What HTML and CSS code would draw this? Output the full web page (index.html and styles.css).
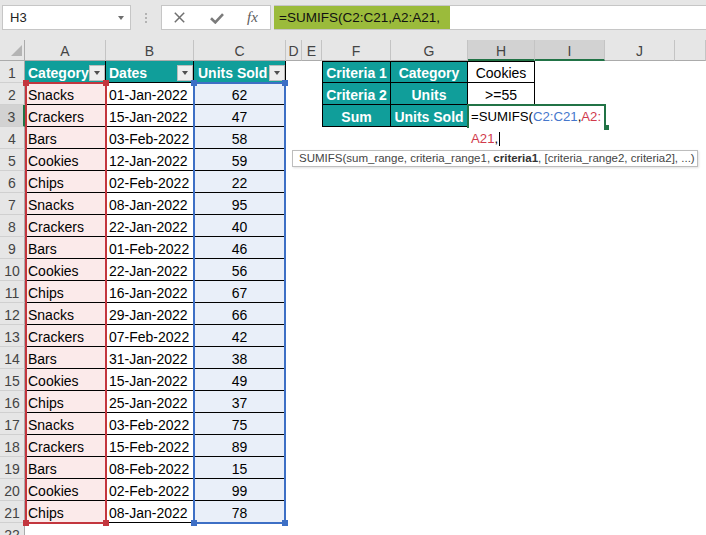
FILE: index.html
```html
<!DOCTYPE html>
<html>
<head>
<meta charset="utf-8">
<link rel="stylesheet" href="styles.css">
</head>
<body>
<div class="toolbar">
  <div class="namebox"><span class="name">H3</span><span class="nb-arrow"></span></div>
  <div class="grip"><i></i><i></i><i></i></div>
  <div class="fbtns">
    <svg class="ic-x" width="11" height="11" viewBox="0 0 11 11"><path d="M0.8 0.8 L10.2 10.2 M10.2 0.8 L0.8 10.2" stroke="#707070" stroke-width="1.5" fill="none"/></svg>
    <svg class="ic-ok" width="14" height="11" viewBox="0 0 14 11"><polyline points="1,5.2 5.3,9.4 13,1.2" stroke="#7b7b7b" stroke-width="2.6" fill="none"/></svg>
    <span class="fx">fx</span>
  </div>
  <div class="fbar"><span class="ftext">=SUMIFS(C2:C21,A2:A21,</span></div>
</div>
<div class="sheet">
  <div class="row colhead">
    <div class="ch corner"><svg width="24" height="20" viewBox="0 0 24 20"><polygon points="22,5 22,16 11,16" fill="#b4b4b4"/></svg></div>
    <div class="ch">A</div><div class="ch">B</div><div class="ch">C</div><div class="ch">D</div><div class="ch">E</div><div class="ch">F</div><div class="ch">G</div><div class="ch sel">H</div><div class="ch sel">I</div><div class="ch">J</div><div class="ch"></div>
  </div>
  <div class="row"><div class="rh">1</div><div class="c t hd">Category<span class="dd"></span></div><div class="c t hd">Dates<span class="dd"></span></div><div class="c t hd hc">Units Sold<span class="dd"></span></div><div></div><div></div><div class="k kh top first">Criteria 1</div><div class="k kh top">Category</div><div class="k top">Cookies</div></div>
  <div class="row"><div class="rh">2</div><div class="c t ca">Snacks</div><div class="c t">01-Jan-2022</div><div class="c t cc">62</div><div></div><div></div><div class="k kh first">Criteria 2</div><div class="k kh">Units</div><div class="k">&gt;=55</div></div>
  <div class="row"><div class="rh sel">3</div><div class="c t ca">Crackers</div><div class="c t">15-Jan-2022</div><div class="c t cc">47</div><div></div><div></div><div class="k kh first">Sum</div><div class="k kh">Units Sold</div></div>
  <div class="row"><div class="rh">4</div><div class="c t ca">Bars</div><div class="c t">03-Feb-2022</div><div class="c t cc">58</div></div>
  <div class="row"><div class="rh">5</div><div class="c t ca">Cookies</div><div class="c t">12-Jan-2022</div><div class="c t cc">59</div></div>
  <div class="row"><div class="rh">6</div><div class="c t ca">Chips</div><div class="c t">02-Feb-2022</div><div class="c t cc">22</div></div>
  <div class="row"><div class="rh">7</div><div class="c t ca">Snacks</div><div class="c t">08-Jan-2022</div><div class="c t cc">95</div></div>
  <div class="row"><div class="rh">8</div><div class="c t ca">Crackers</div><div class="c t">22-Jan-2022</div><div class="c t cc">40</div></div>
  <div class="row"><div class="rh">9</div><div class="c t ca">Bars</div><div class="c t">01-Feb-2022</div><div class="c t cc">46</div></div>
  <div class="row"><div class="rh">10</div><div class="c t ca">Cookies</div><div class="c t">22-Jan-2022</div><div class="c t cc">56</div></div>
  <div class="row"><div class="rh">11</div><div class="c t ca">Chips</div><div class="c t">16-Jan-2022</div><div class="c t cc">67</div></div>
  <div class="row"><div class="rh">12</div><div class="c t ca">Snacks</div><div class="c t">29-Jan-2022</div><div class="c t cc">66</div></div>
  <div class="row"><div class="rh">13</div><div class="c t ca">Crackers</div><div class="c t">07-Feb-2022</div><div class="c t cc">42</div></div>
  <div class="row"><div class="rh">14</div><div class="c t ca">Bars</div><div class="c t">31-Jan-2022</div><div class="c t cc">38</div></div>
  <div class="row"><div class="rh">15</div><div class="c t ca">Cookies</div><div class="c t">15-Jan-2022</div><div class="c t cc">49</div></div>
  <div class="row"><div class="rh">16</div><div class="c t ca">Chips</div><div class="c t">25-Jan-2022</div><div class="c t cc">37</div></div>
  <div class="row"><div class="rh">17</div><div class="c t ca">Snacks</div><div class="c t">03-Feb-2022</div><div class="c t cc">75</div></div>
  <div class="row"><div class="rh">18</div><div class="c t ca">Crackers</div><div class="c t">15-Feb-2022</div><div class="c t cc">89</div></div>
  <div class="row"><div class="rh">19</div><div class="c t ca">Bars</div><div class="c t">08-Feb-2022</div><div class="c t cc">15</div></div>
  <div class="row"><div class="rh">20</div><div class="c t ca">Cookies</div><div class="c t">02-Feb-2022</div><div class="c t cc">99</div></div>
  <div class="row"><div class="rh">21</div><div class="c t ca">Chips</div><div class="c t">08-Jan-2022</div><div class="c t cc">78</div></div>
  <div class="row"><div class="rh">22</div></div>

  <div class="rng red"><i class="hdl tl"></i><i class="hdl tr"></i><i class="hdl bl"></i><i class="hdl br"></i></div>
  <div class="rng blue"><i class="hdl tl"></i><i class="hdl tr"></i><i class="hdl bl"></i><i class="hdl br"></i></div>

  <div class="editor">
    <div class="ln">=SUMIFS(<span class="rb">C2:C21</span>,<span class="rr">A2:</span></div>
    <div class="ln"><span class="rr">A21</span>,<span class="caret"></span></div>
    <i class="fill"></i>
  </div>

  <div class="tip">SUMIFS(sum_range, criteria_range1, <b>criteria1</b>, [criteria_range2, criteria2], ...)</div>
</div>
</body>
</html>
```
FILE: styles.css
```css
* { box-sizing: border-box; }
html, body { margin: 0; padding: 0; }
body {
  width: 706px;
  height: 535px;
  overflow: hidden;
  background: #fff;
  font-family: "Liberation Sans", Arial, sans-serif;
  color: #000;
}

/* ---------- formula toolbar ---------- */
.toolbar {
  height: 40px;
  background: #e6e6e6;
  display: flex;
  align-items: flex-start;
  padding-top: 5px;
}
.namebox {
  margin-left: 2px;
  width: 129px;
  height: 25px;
  background: #fff;
  border: 1px solid #c6c6c6;
  display: flex;
  align-items: center;
  padding: 0 6px 0 7px;
  font-size: 13px;
  color: #222;
}
.namebox .name { flex: 1; }
.nb-arrow {
  width: 0; height: 0;
  border-left: 3.5px solid transparent;
  border-right: 3.5px solid transparent;
  border-top: 4px solid #6e6e6e;
}
.grip {
  width: 30px;
  height: 25px;
  display: flex;
  flex-direction: column;
  align-items: center;
  justify-content: center;
  gap: 2px;
}
.grip i { display: block; width: 2px; height: 2px; background: #b3b3b3; }
.fbtns {
  width: 110px;
  height: 25px;
  background: #fff;
  border: 1px solid #c6c6c6;
  display: flex;
  align-items: center;
  padding-left: 12px;
}
.ic-x { display: block; }
.ic-ok { display: block; margin-left: 25px; margin-top: 1px; }
.fx {
  margin-left: 23px;
  font-family: "Liberation Serif", "Times New Roman", serif;
  font-style: italic;
  font-size: 15px;
  color: #5c5c5c;
}
.fbar {
  flex: 1;
  margin-left: 3px;
  height: 25px;
  background: #fff;
  border-top: 1px solid #c6c6c6;
  border-bottom: 1px solid #c6c6c6;
}
.ftext {
  display: inline-block;
  height: 23px;
  line-height: 24px;
  background: #9bbb3b;
  padding: 0 10px 0 5px;
  font-size: 13.5px;
  color: #111;
}

/* ---------- sheet ---------- */
.sheet { position: relative; }
.row {
  display: grid;
  grid-template-columns: 25px 81px 88px 92px 16px 20px 69px 77px 67px 70px 70px 1fr;
  height: 22px;
}
.colhead { height: 21px; background: #e6e6e6; }
.ch {
  border-right: 1px solid #c4c4c4;
  border-bottom: 1px solid #ababab;
  text-align: center;
  font-size: 14px;
  padding-top: 3px;
  line-height: 17px;
  color: #444;
}
.ch.corner { border-right-color: #ababab; padding-top: 0; }
.ch.corner svg { display: block; }
.ch.sel {
  background: #d2d2d2;
  border-bottom: 2px solid #217346;
  line-height: 16px;
}
.rh {
  background: #e6e6e6;
  border-right: 1px solid #ababab;
  border-bottom: 1px solid #d0d0d0;
  text-align: center;
  font-size: 14px;
  padding-top: 3px;
  line-height: 18px;
  color: #444;
}
.rh.sel { background: #d2d2d2; border-right: 2px solid #217346; }

.c {
  font-size: 14px;
  padding-top: 3px;
  line-height: 18px;
  padding-left: 3px;
  white-space: nowrap;
  overflow: hidden;
}
.t { border-right: 1px solid #000; border-bottom: 1px solid #000; }
.hd {
  background: #109e9a;
  color: #fff;
  font-weight: bold;
  display: flex;
}
.hc { padding-left: 4px; }
.dd {
  margin-left: auto;
  align-self: flex-end;
  margin-bottom: 1px;
  width: 16px;
  height: 16px;
  background: #eeeeee;
  border: 1px solid #bcbcbc;
  display: flex;
  align-items: center;
  justify-content: center;
}
.dd::after {
  content: "";
  width: 0; height: 0;
  border-left: 3.5px solid transparent;
  border-right: 3.5px solid transparent;
  border-top: 4px solid #505050;
}
.ca { background: #fbeaea; }
.cc { background: #e9eff9; text-align: center; padding-left: 0; }

.k {
  border-right: 1px solid #000;
  border-bottom: 1px solid #000;
  text-align: center;
  font-size: 14px;
  padding-top: 3px;
  line-height: 18px;
  white-space: nowrap;
}
.k.top { border-top: 1px solid #000; padding-top: 2px; }
.k.first { border-left: 1px solid #000; }
.kh { background: #109e9a; color: #fff; font-weight: bold; }

/* ---------- formula reference ranges ---------- */
.rng {
  position: absolute;
  top: 42px;
  height: 442px;
  border: 2px solid currentColor;
}
.rng.red { left: 25px; width: 82px; color: #c3363e; }
.rng.blue { left: 193px; width: 93px; color: #3d6fc5; }
.hdl { position: absolute; width: 6px; height: 6px; background: currentColor; }
.hdl.tl { left: -4px; top: -4px; }
.hdl.tr { right: -4px; top: -4px; }
.hdl.bl { left: -4px; bottom: -4px; }
.hdl.br { right: -4px; bottom: -4px; }

/* ---------- in-cell editor ---------- */
.editor {
  position: absolute;
  left: 467px;
  top: 64px;
  width: 139px;
  height: 24px;
  border: 2px solid #217346;
  border-bottom: 0;
  background: #fff;
  padding-left: 2px;
  font-size: 13.2px;
  line-height: 22px;
  white-space: nowrap;
}
.rb { color: #4677cc; }
.rr { color: #d13a4c; }
.caret {
  display: inline-block;
  width: 1px;
  height: 14px;
  background: #000;
  margin-left: 1px;
  vertical-align: -3px;
}
.fill {
  position: absolute;
  right: -5px;
  bottom: -2px;
  width: 5px;
  height: 5px;
  background: #217346;
}

/* ---------- function tooltip ---------- */
.tip {
  position: absolute;
  left: 292px;
  top: 110px;
  width: 406px;
  height: 17px;
  background: #fff;
  border: 1px solid #bdbdbd;
  box-shadow: 1px 1px 2px rgba(0, 0, 0, 0.12);
  font-size: 11.5px;
  line-height: 15px;
  color: #444;
  padding-left: 6px;
  white-space: nowrap;
}
.tip b { color: #333; }
```
